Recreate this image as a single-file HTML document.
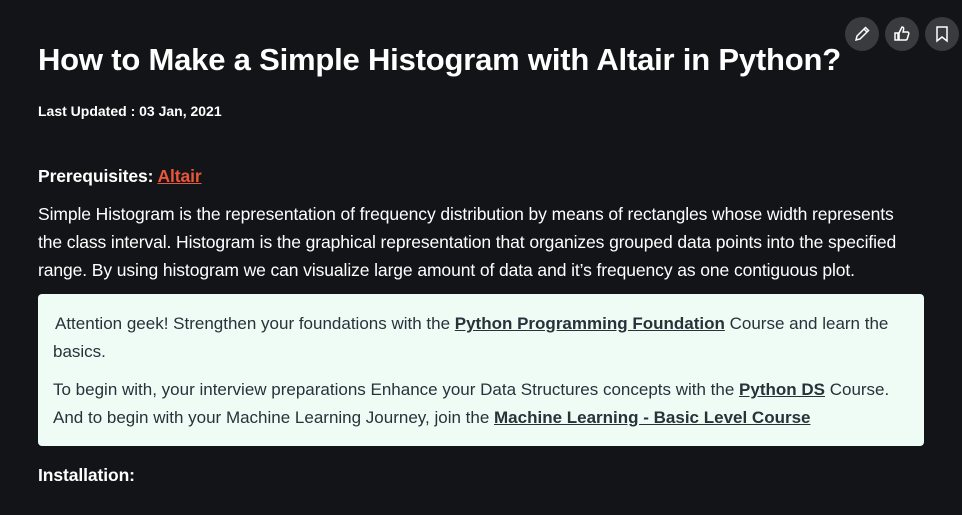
<!DOCTYPE html>
<html><head><meta charset="utf-8"><style>
body{margin:0;background:#131417;width:962px;height:515px;overflow:hidden;font-family:"Liberation Sans",sans-serif;color:#fff;position:relative}
.a{position:absolute;white-space:nowrap}
h1{position:absolute;left:38px;top:42px;margin:0;font-size:31px;font-weight:bold;white-space:nowrap;letter-spacing:-0.2px}
.btn{position:absolute;top:17px;width:34px;height:34px;border-radius:50%;background:#3a3b3e;display:flex;align-items:center;justify-content:center}
.p{font-size:17.5px;letter-spacing:-0.1px}
.box{position:absolute;left:38px;top:294px;width:886px;height:152px;background:#effcf6;border-radius:4px;color:#273239}
.box .a{font-size:17px;letter-spacing:0px}
.box b{text-decoration:underline;color:#273239}
</style></head><body>
<div class="btn" style="left:845px"><svg width="18" height="18" viewBox="0 0 18 18" fill="none" stroke="#fff" stroke-width="1.5"><path d="M3 15l1-4L12.5 2.5l3 3L7 14z M11 4l3 3"/></svg></div>
<div class="btn" style="left:885px"><svg width="18" height="18" viewBox="0 0 18 18" fill="none" stroke="#fff" stroke-width="1.5"><rect x="2" y="8" width="3" height="7"/><path d="M6 8l3-6c1.5 0 2 1 1.5 3L10 7h4.5c1 0 1.5 1 1.2 2l-1.5 5c-.3 1-1 1-1.7 1H6z"/></svg></div>
<div class="btn" style="left:925px"><svg width="18" height="18" viewBox="0 0 18 18" fill="none" stroke="#fff" stroke-width="1.5"><path d="M4 2h10v14l-5-4-5 4z"/></svg></div>
<h1>How to Make a Simple Histogram with Altair in Python?</h1>
<div class="a" style="left:38px;top:103px;font-size:14px;font-weight:bold">Last Updated : 03 Jan, 2021</div>
<div class="a p" style="left:38px;top:166px;font-weight:bold">Prerequisites: <span style="color:#e9573a;text-decoration:underline">Altair</span></div>
<div class="a p" style="left:38px;top:204px">Simple Histogram is the representation of frequency distribution by means of rectangles whose width represents</div>
<div class="a p" style="left:38px;top:232px">the class interval. Histogram is the graphical representation that organizes grouped data points into the specified</div>
<div class="a p" style="left:38px;top:260px">range. By using histogram we can visualize large amount of data and it’s frequency as one contiguous plot.</div>
<div class="box">
<div class="a" style="left:17px;top:20px">Attention geek! Strengthen your foundations with the <b>Python Programming Foundation</b> Course and learn the</div>
<div class="a" style="left:15px;top:48px">basics.</div>
<div class="a" style="left:15px;top:86px">To begin with, your interview preparations Enhance your Data Structures concepts with the <b>Python DS</b> Course.</div>
<div class="a" style="left:15px;top:114px">And to begin with your Machine Learning Journey, join the <b>Machine Learning - Basic Level Course</b></div>
</div>
<div class="a p" style="left:38px;top:465px;font-weight:bold">Installation:</div>
</body></html>
